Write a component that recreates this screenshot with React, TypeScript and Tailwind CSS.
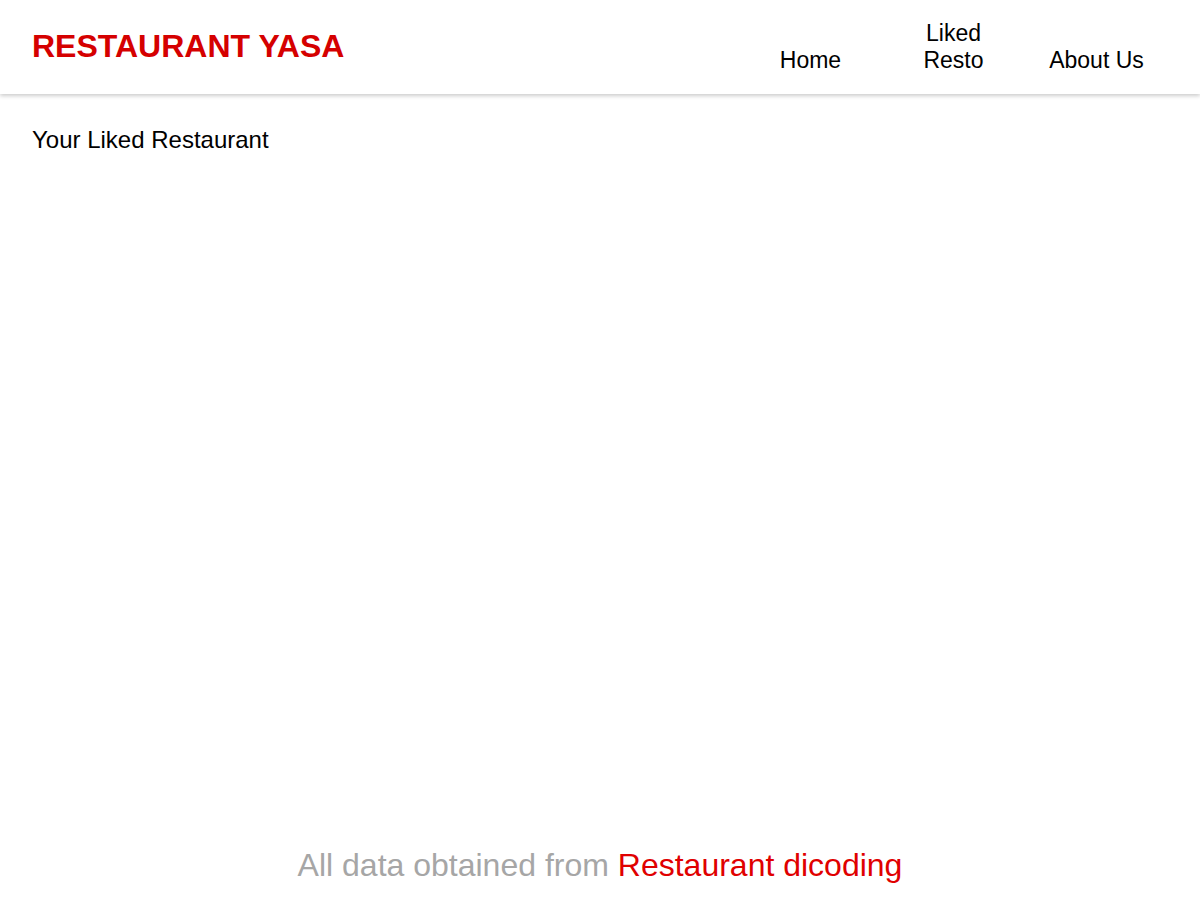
import React from "react";

export default function App() {
  return (
    <div className="min-h-screen flex flex-col bg-white text-black" style={{ fontFamily: '"Liberation Sans", Arial, sans-serif' }}>
      <header className="h-[94px] flex justify-between items-start pl-8 pr-8 shadow-[0_2px_4px_rgba(0,0,0,0.2)] relative z-10">
        <h1 className="text-[32px] font-bold text-[#d50000] leading-[37px] mt-[28px]">RESTAURANT YASA</h1>
        <nav className="h-full">
          <ul className="flex items-end h-full pb-[21px]">
            <li className="w-[143px] px-[21px] text-center text-[23px] leading-[26.5px]"><a href="#">Home</a></li>
            <li className="w-[143px] px-[21px] text-center text-[23px] leading-[26.5px]"><a href="#">Liked Resto</a></li>
            <li className="w-[143px] px-[21px] text-center text-[23px] leading-[26.5px]"><a href="#">About Us</a></li>
          </ul>
        </nav>
      </header>
      <main className="flex-1 px-8 pt-[32px]">
        <h2 className="text-[24px] leading-[27px]">Your Liked Restaurant</h2>
      </main>
      <footer className="text-center text-[32px] leading-[37px] pb-[16px] text-[#a6a6a6]">
        All data obtained from <span className="text-[#e00000]">Restaurant dicoding</span>
      </footer>
    </div>
  );
}
